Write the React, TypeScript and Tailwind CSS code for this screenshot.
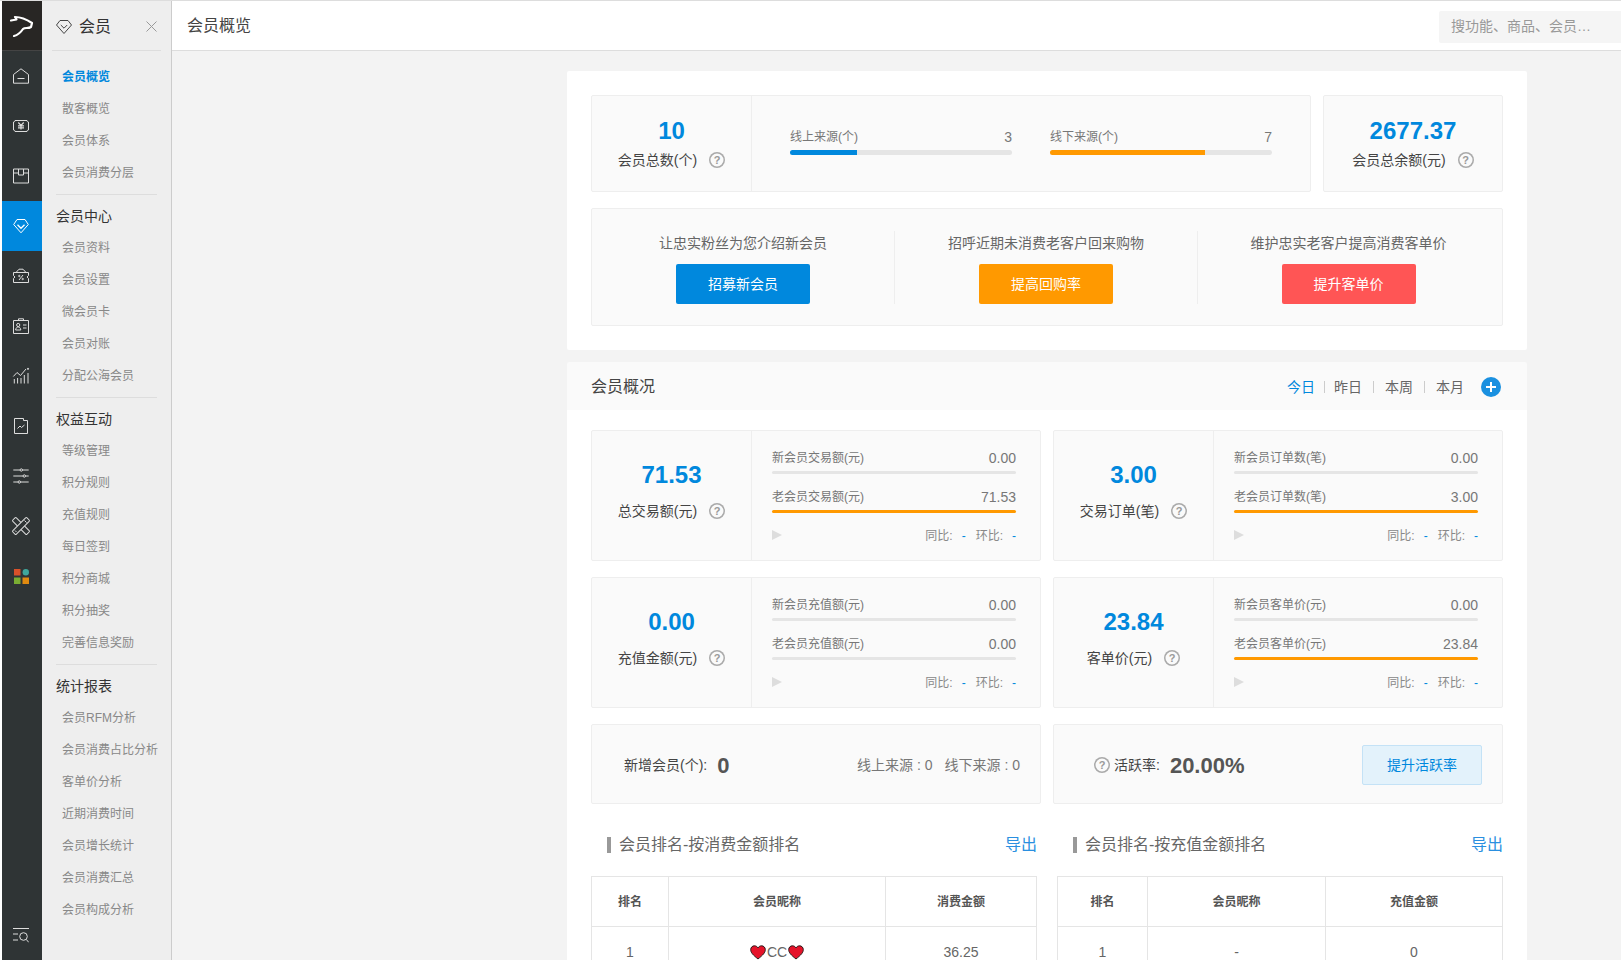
import type { ReactNode } from 'react'

// rail icons, drawn on a 16 box
const railIcons: ReactNode[] = [
  <><path d="M.5 6.500 8 .8l7.500 5.700v8.700H.5z" /><path d="M4.500 10.500h7" /></>,
  <>
    <path d="M2 2.500h12a1.500 1.500 0 0 0 1.500 1.500v8a1.500 1.500 0 0 0-1.500 1.500H2A1.500 1.500 0 0 0 .5 12V4A1.500 1.500 0 0 0 2 2.500z" />
    <path d="M5.300 4.500 8 7.300l2.700-2.800M5 7.800h6M5 9.800h6M8 7.300v4.200" strokeWidth="1.200" />
  </>,
  <><path d="M.5 1h15v14H.5z" /><path d="M.5 5h5M10.500 5h5M5.500 1v6h5V1" /></>,
  <><path d="M4 1.500h8L15.300 6.500 8 14.800.7 6.500z" /><path d="M4.500 6.800 8 10.300l3.500-3.500" strokeWidth="1.300" /></>,
  <>
    <path d="M.5 4.500h15v3L14 9l1.500 1.500v4H.5v-4L2 9 .5 7.500z" />
    <path d="M3 4.500 6 1.200h4l3 3.300M10 7 6 12" />
    <circle cx="6.300" cy="8" r=".7" />
    <circle cx="9.700" cy="11" r=".7" />
  </>,
  <>
    <path d="M.5 2.500h15v13H.5zM5.500 2.500V.8h5v1.700" />
    <circle cx="5.200" cy="7" r="1.600" />
    <path d="M2.600 12c.2-2 1.200-3 2.600-3s2.400 1 2.600 3zM10 7h3.500M10 10h3.500" />
  </>,
  <>
    <path d="M1.300 11v4.500M4.600 10v5.500M8 10v5.500M11.300 7v8.500M15 5v10.500M.3 8.500 4 4.500l3.500 3L13 1" />
    <circle cx="15" cy=".8" r=".6" fill="currentColor" />
  </>,
  <><path d="M1.500.5h9v2h4v13h-13z" /><path d="M4.500 10.500 7 8l1.500 1.500 3-2.500" /></>,
  <>
    <path d="M.3 2h15.400M.3 8h15.400M.3 14h15.400" />
    <circle cx="8.300" cy="2" r="1.200" fill="#2f3435" />
    <circle cx="11.300" cy="8" r="1.200" fill="#2f3435" />
    <circle cx="6.300" cy="14" r="1.200" fill="#2f3435" />
  </>,
  <>
    <rect x="5.500" y="-2" width="5" height="20" rx="1" transform="rotate(-45 8 8)" />
    <rect x="5.500" y="-2" width="5" height="20" rx="1" transform="rotate(45 8 8)" fill="#2f3435" />
    <path d="m2 12.500 1.500 1.500M11.500 2.500l2 2" />
  </>,
]

const menuGroups = [
  { title: null, items: ['会员概览', '散客概览', '会员体系', '会员消费分层'] },
  { title: '会员中心', items: ['会员资料', '会员设置', '微会员卡', '会员对账', '分配公海会员'] },
  { title: '权益互动', items: ['等级管理', '积分规则', '充值规则', '每日签到', '积分商城', '积分抽奖', '完善信息奖励'] },
  { title: '统计报表', items: ['会员RFM分析', '会员消费占比分析', '客单价分析', '近期消费时间', '会员增长统计', '会员消费汇总', '会员构成分析'] },
]

const metrics = [
  { value: '71.53', label: '总交易额(元)', a: '新会员交易额(元)', av: '0.00', b: '老会员交易额(元)', bv: '71.53', on: true },
  { value: '3.00', label: '交易订单(笔)', a: '新会员订单数(笔)', av: '0.00', b: '老会员订单数(笔)', bv: '3.00', on: true },
  { value: '0.00', label: '充值金额(元)', a: '新会员充值额(元)', av: '0.00', b: '老会员充值额(元)', bv: '0.00', on: false },
  { value: '23.84', label: '客单价(元)', a: '新会员客单价(元)', av: '0.00', b: '老会员客单价(元)', bv: '23.84', on: true },
]

const actions = [
  { text: '让忠实粉丝为您介绍新会员', btn: '招募新会员', color: 'bg-[#0088dd]' },
  { text: '招呼近期未消费老客户回来购物', btn: '提高回购率', color: 'bg-[#ff9900]' },
  { text: '维护忠实老客户提高消费客单价', btn: '提升客单价', color: 'bg-[#ff5555]' },
]

function RailIcon({ children }: { children: ReactNode }) {
  return (
    <svg width="16" height="16" viewBox="0 0 16 16" fill="none" stroke="currentColor" strokeWidth="1" overflow="visible">
      {children}
    </svg>
  )
}

function Help() {
  return (
    <span className="flex h-4 w-4 shrink-0 items-center justify-center rounded-full text-[11px] font-bold leading-none text-[#999999] shadow-[inset_0_0_0_1.5px_#aaaaaa]">
      ?
    </span>
  )
}

function Heart() {
  return (
    <svg width="16" height="15" viewBox="0 0 16 15">
      <path d="M8 14C3 10 .7 7.600.7 4.600.7 2.400 2.400.8 4.400.8 6 .8 7.300 1.700 8 3c.7-1.300 2-2.200 3.600-2.200 2 0 3.700 1.600 3.700 3.800C15.300 7.600 13 10 8 14z" fill="#e5132a" stroke="#2a1a1a" strokeWidth="1" />
    </svg>
  )
}

function Bar({ on }: { on: boolean }) {
  return <div className={`mt-[3px] h-[3px] rounded-[2px] ${on ? 'bg-[#ff9900]' : 'bg-[#e5e5e5]'}`} />
}

function MetricBox({ m }: { m: (typeof metrics)[number] }) {
  return (
    <div className="flex h-[131px] rounded-[2px] border border-[#eeeeee] bg-[#fafafa]">
      <div className="flex w-[160px] shrink-0 flex-col items-center border-r border-[#eeeeee] pt-[28px]">
        <div className="text-[24px] font-bold leading-[32px] text-[#0088dd]">{m.value}</div>
        <div className="mt-[10px] flex items-center gap-[12px] text-[14px] leading-[20px] text-[#444444]">
          {m.label}
          <Help />
        </div>
      </div>
      <div className="flex-1 pl-[20px] pr-[24px] pt-[17px]">
        <div className="flex h-[20px] items-center justify-between text-[12px] text-[#777777]">
          <span>{m.a}</span>
          <span className="text-[14px]">{m.av}</span>
        </div>
        <Bar on={false} />
        <div className="mt-[13px] flex h-[20px] items-center justify-between text-[12px] text-[#777777]">
          <span>{m.b}</span>
          <span className="text-[14px]">{m.bv}</span>
        </div>
        <Bar on={m.on} />
        <div className="mt-[13px] flex h-[20px] items-center justify-between text-[12px] text-[#888888]">
          <span className="-mt-[2px] h-0 w-0 border-y-[5px] border-l-[10px] border-y-transparent border-l-[#dddddd]" />
          <span className="flex gap-[10px]">
            <span>同比:<span className="ml-[9px] text-[#0088dd]">-</span></span>
            <span>环比:<span className="ml-[9px] text-[#0088dd]">-</span></span>
          </span>
        </div>
      </div>
    </div>
  )
}

function Source({ label, value, pct, color }: { label: string; value: string; pct: number; color: string }) {
  return (
    <div className="w-[222px]">
      <div className="flex h-[20px] items-center justify-between text-[12px] text-[#777777]">
        <span>{label}</span>
        <span className="text-[14px]">{value}</span>
      </div>
      <div className="mt-[3px] h-[5px] overflow-hidden rounded-[3px] bg-[#e5e5e5]">
        <div className={`h-full ${color}`} style={{ width: `${pct}%` }} />
      </div>
    </div>
  )
}

function RankTable({ title, amount, cols, name, value }: {
  title: string
  amount: string
  cols: string
  name: ReactNode
  value: string
}) {
  return (
    <div className="w-[446px]">
      <div className="flex h-[16px] items-center justify-between pl-[16px]">
        <div className="flex items-center gap-[8px] text-[16px] text-[#666666]">
          <span className="h-[16px] w-[4px] bg-[#999999]" />
          {title}
        </div>
        <span className="text-[16px] text-[#2a8fe0]">导出</span>
      </div>
      <div className="mt-[23px] border border-[#e5e5e5]">
        <div className={`grid h-[50px] items-center border-b border-[#e5e5e5] text-center text-[12px] font-bold text-[#555555] ${cols}`}>
          <span className="flex h-full items-center justify-center border-r border-[#e5e5e5]">排名</span>
          <span className="flex h-full items-center justify-center border-r border-[#e5e5e5]">会员昵称</span>
          <span>{amount}</span>
        </div>
        <div className={`grid h-[50px] items-center text-center text-[14px] text-[#666666] ${cols}`}>
          <span className="flex h-full items-center justify-center border-r border-[#e5e5e5]">1</span>
          <span className="flex h-full items-center justify-center border-r border-[#e5e5e5]">{name}</span>
          <span>{value}</span>
        </div>
      </div>
    </div>
  )
}

export default function App() {
  return (
    <div className="flex h-[960px] overflow-hidden border-t border-[#dddddd] bg-white pl-[2px] font-['Liberation_Sans','Noto_Sans_CJK_SC',sans-serif]">
      {/* icon rail */}
      <div className="flex w-[40px] shrink-0 flex-col bg-[#2f3435] text-[#dddddd]">
        <div className="flex h-[50px] items-center justify-center border-b border-[#444444] bg-[#282624]">
          <svg width="40" height="40" viewBox="0 0 40 40" fill="none" stroke="#ffffff" strokeWidth="2.200" strokeLinejoin="round" strokeLinecap="round">
            <path d="M9 14.500 14.500 13.500 13 11C18 11 24 13 30 17L29 21C26 23 23 21 21 23 19 26 16 29 12 30" />
          </svg>
        </div>
        {railIcons.map((icon, i) => (
          <div key={i} className={`flex h-[50px] items-center justify-center pr-[2px] ${i === 3 ? 'bg-[#0088dd] text-white' : ''}`}>
            <RailIcon>{icon}</RailIcon>
          </div>
        ))}
        <div className="flex h-[50px] items-center justify-center pr-[2px]">
          <svg width="15" height="15" viewBox="0 0 15 15">
            <rect x="0" y="0" width="6.500" height="6.500" fill="#d9512a" />
            <circle cx="11.800" cy="3.200" r="3.200" fill="#3fa79c" />
            <rect x="0" y="8.500" width="6.500" height="6.500" fill="#7aad33" />
            <rect x="8.500" y="8.500" width="6.500" height="6.500" fill="#e08a10" />
          </svg>
        </div>
        <div className="mt-auto flex h-[32px] items-start justify-center pr-[2px]">
          <svg width="16" height="16" viewBox="0 0 16 16" fill="none" stroke="currentColor" strokeWidth="1">
            <path d="M0 .5h16M0 6h5M0 12h5" />
            <circle cx="10.500" cy="8.500" r="3.800" />
            <path d="m13.300 11.500 2.400 2.800" />
          </svg>
        </div>
      </div>

      {/* secondary menu */}
      <div className="w-[130px] shrink-0 border-r border-[#cccccc] bg-[#eeeeee]">
        <div className="mx-[10px] flex h-[50px] items-center border-b border-[#dddddd] px-[4px] pt-[2px] text-[16px] text-[#333333]">
          <svg width="16" height="16" viewBox="0 0 16 16" fill="none" stroke="#444444" strokeWidth="1">
            <path d="M4 1.500h8L15.500 6 8 14.500.5 6z" />
            <path d="M4.800 6 8 9.200 11.200 6" />
          </svg>
          <span className="ml-[7px]">会员</span>
          <svg className="ml-auto" width="11" height="11" viewBox="0 0 11 11" stroke="#999999" strokeWidth="1">
            <path d="m.5.5 10 10M10.500.5l-10 10" />
          </svg>
        </div>
        <div className="pt-[10px]">
          {menuGroups.map((g, gi) => (
            <div key={gi}>
              {g.title && (
                <>
                  <div className="mx-[14px] mt-[5px] border-t border-[#dddddd]" />
                  <div className="mt-[5px] flex h-[32px] items-center pl-[14px] text-[14px] text-[#333333]">{g.title}</div>
                </>
              )}
              {g.items.map(item => (
                <div
                  key={item}
                  className={`flex h-[32px] items-center whitespace-nowrap pl-[20px] text-[12px] ${item === '会员概览' ? 'font-bold text-[#0088dd]' : 'text-[#888888]'}`}
                >
                  {item}
                </div>
              ))}
            </div>
          ))}
        </div>
      </div>

      {/* main */}
      <div className="flex min-w-0 flex-1 flex-col bg-[#f3f3f3]">
        <div className="flex h-[50px] shrink-0 items-center justify-between border-b border-[#dddddd] bg-white pl-[15px]">
          <span className="text-[16px] text-[#444444]">会员概览</span>
          <div className="mt-[2px] flex h-[32px] w-[182px] items-center rounded-l-[2px] bg-[#f5f5f5] pl-[12px] text-[14px] text-[#999999]">
            搜功能、商品、会员…
          </div>
        </div>

        <div className="ml-[395px] w-[960px] pt-[20px]">
          <div className="rounded-[2px] bg-white p-[24px]">
            <div className="flex gap-[12px]">
              <div className="flex h-[97px] w-[720px] rounded-[2px] border border-[#eeeeee] bg-[#fafafa]">
                <div className="flex w-[160px] shrink-0 flex-col items-center border-r border-[#eeeeee] pt-[20px]">
                  <div className="text-[24px] font-bold leading-[30px] text-[#0088dd]">10</div>
                  <div className="mt-[4px] flex items-center gap-[12px] text-[14px] leading-[20px] text-[#444444]">
                    会员总数(个)
                    <Help />
                  </div>
                </div>
                <div className="flex flex-1 gap-[38px] pl-[38px] pt-[31px]">
                  <Source label="线上来源(个)" value="3" pct={30} color="bg-[#0088dd]" />
                  <Source label="线下来源(个)" value="7" pct={70} color="bg-[#ff9900]" />
                </div>
              </div>
              <div className="flex h-[97px] w-[180px] flex-col items-center rounded-[2px] border border-[#eeeeee] bg-[#fafafa] pt-[20px]">
                <div className="text-[24px] font-bold leading-[30px] text-[#0088dd]">2677.37</div>
                <div className="mt-[4px] flex items-center gap-[12px] text-[14px] leading-[20px] text-[#444444]">
                  会员总余额(元)
                  <Help />
                </div>
              </div>
            </div>

            <div className="mt-[16px] grid h-[118px] grid-cols-[303px_303px_1fr] rounded-[2px] border border-[#eeeeee] bg-[#fafafa] py-[22px]">
              {actions.map((a, i) => (
                <div key={a.btn} className={`flex flex-col items-center pt-[2px] ${i < 2 ? 'border-r border-[#eeeeee]' : 'pr-[3px]'}`}>
                  <div className="text-[14px] leading-[20px] text-[#666666]">{a.text}</div>
                  <div className={`mt-[11px] flex h-[40px] w-[134px] items-center justify-center rounded-[2px] text-[14px] text-white ${a.color}`}>
                    {a.btn}
                  </div>
                </div>
              ))}
            </div>
          </div>

          <div className="mt-[12px] flex h-[48px] items-center justify-between rounded-t-[2px] bg-[#fafafa] px-[24px] pt-[2px]">
            <span className="text-[16px] text-[#444444]">会员概况</span>
            <div className="flex items-center text-[14px] text-[#666666]">
              <span className="text-[#0088dd]">今日</span>
              <span className="mx-[9px] h-[12px] w-px bg-[#cccccc]" />
              <span>昨日</span>
              <span className="mx-[11px] h-[12px] w-px bg-[#cccccc]" />
              <span>本周</span>
              <span className="mx-[11px] h-[12px] w-px bg-[#cccccc]" />
              <span>本月</span>
              <span className="ml-[17px] mr-[2px] flex h-[20px] w-[20px] items-center justify-center rounded-full bg-[#1a90e0]">
                <svg width="10" height="10" viewBox="0 0 10 10" stroke="#ffffff" strokeWidth="2">
                  <path d="M5 0v10M0 5h10" />
                </svg>
              </span>
            </div>
          </div>

          <div className="bg-white px-[24px] pt-[20px]">
            <div className="grid grid-cols-2 gap-x-[12px] gap-y-[16px]">
              {metrics.map(m => <MetricBox key={m.label} m={m} />)}
              <div className="flex h-[80px] items-center justify-between rounded-[2px] border border-[#eeeeee] bg-[#fafafa] pl-[32px] pr-[20px] pt-[2px]">
                <div className="flex items-center text-[14px] text-[#444444]">
                  新增会员(个):
                  <span className="ml-[10px] text-[22px] font-bold text-[#555555]">0</span>
                </div>
                <div className="flex gap-[12px] text-[14px] text-[#777777]">
                  <span>线上来源 : 0</span>
                  <span>线下来源 : 0</span>
                </div>
              </div>
              <div className="flex h-[80px] items-center rounded-[2px] border border-[#eeeeee] bg-[#fafafa] pl-[40px] pr-[20px] pt-[2px]">
                <Help />
                <span className="ml-[4px] text-[14px] text-[#444444]">活跃率:</span>
                <span className="ml-[10px] text-[22px] font-bold text-[#555555]">20.00%</span>
                <div className="ml-auto flex h-[40px] w-[120px] items-center justify-center rounded-[2px] border border-[#c4e2f6] bg-[#e3f2fb] text-[14px] text-[#0088dd]">
                  提升活跃率
                </div>
              </div>
            </div>

            <div className="mt-[33px] flex justify-between">
              <RankTable
                title="会员排名-按消费金额排名"
                amount="消费金额"
                cols="grid-cols-[77px_217px_1fr]"
                name={<span className="flex items-center gap-px"><Heart />CC<Heart /></span>}
                value="36.25"
              />
              <RankTable
                title="会员排名-按充值金额排名"
                amount="充值金额"
                cols="grid-cols-[90px_178px_1fr]"
                name="-"
                value="0"
              />
            </div>
          </div>
        </div>
      </div>
    </div>
  )
}
